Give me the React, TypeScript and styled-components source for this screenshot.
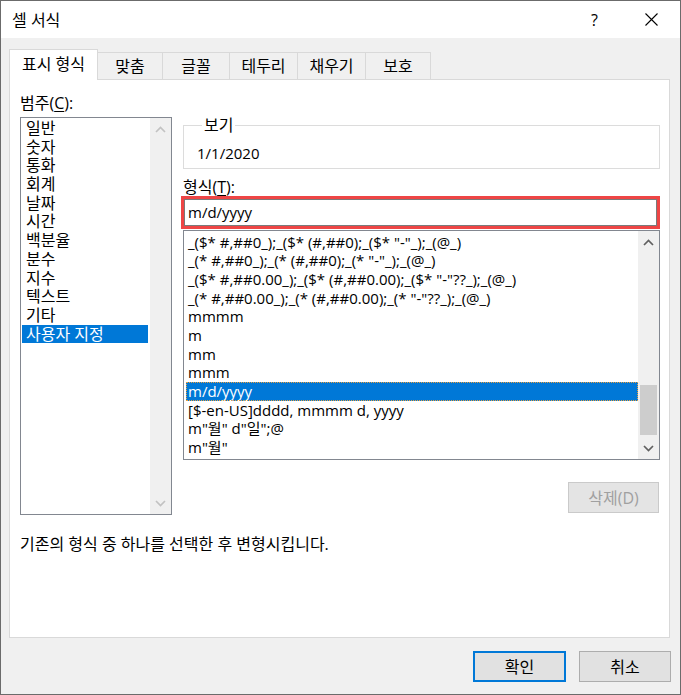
import React from 'react';
import styled, { createGlobalStyle } from 'styled-components';

const Global = createGlobalStyle`
  html, body { margin: 0; padding: 0; background: #ffffff; }
  body {
    font-family: "Open Sans", "Noto Sans CJK KR", sans-serif;
    color: #000;
  }
  * { box-sizing: border-box; }
`;

const FONT = `"Open Sans", "Noto Sans CJK KR", sans-serif`;
const KO = 16;
const LATIN = 15;

const Window = styled.div`
  width: 681px;
  height: 695px;
  border: 1px solid #6b6b6b;
  background: #f0f0f0;
  display: flex;
  flex-direction: column;
  font-family: ${FONT};
  font-size: ${KO}px;
`;

const TitleBar = styled.div`
  height: 37px;
  background: #ffffff;
  display: flex;
  align-items: center;
  padding-left: 11px;
`;

const Title = styled.div`
  flex: 1;
  font-size: ${KO}px;
  line-height: 20px;
  margin-top: 1px;
`;

const CaptionButton = styled.div<{ $w: number }>`
  width: ${(p) => p.$w}px;
  height: 37px;
  display: flex;
  align-items: center;
  justify-content: center;
  font-size: 16px;
  line-height: 20px;
`;

const Body = styled.div`
  flex: 1;
  display: flex;
  flex-direction: column;
  padding: 11px 10px 12px 8px;
`;

const TabRow = styled.div`
  display: flex;
  align-items: flex-end;
  margin-bottom: -1px;
  position: relative;
  z-index: 1;
`;

const Tab = styled.div<{ $w: number; $active?: boolean }>`
  width: ${(p) => p.$w}px;
  height: ${(p) => (p.$active ? 31 : 28)}px;
  background: ${(p) => (p.$active ? '#ffffff' : '#f0f0f0')};
  border: 1px solid #d9d9d9;
  border-left: ${(p) => (p.$active ? '1px solid #d9d9d9' : '0')};
  border-bottom: ${(p) => (p.$active ? '0' : '1px solid #d9d9d9')};
  display: flex;
  justify-content: center;
  align-items: ${(p) => (p.$active ? 'flex-start' : 'center')};
  padding-top: ${(p) => (p.$active ? '4px' : '0')};
  font-size: ${KO}px;
  line-height: 20px;
`;

const Panel = styled.div`
  flex: 1;
  background: #ffffff;
  border: 1px solid #d9d9d9;
  padding: 13px 9px 0 10px;
  display: flex;
  flex-direction: column;
`;

const Columns = styled.div`
  display: grid;
  grid-template-columns: 152px 477px;
  column-gap: 11px;
`;

const Column = styled.div`
  display: flex;
  flex-direction: column;
`;

const Label = styled.div`
  font-size: ${KO}px;
  line-height: 20px;
  height: 20px;
`;

const U = styled.span`
  text-decoration: underline;
  text-underline-offset: 2px;
`;

const ListBox = styled.div<{ $h: number; $mt: number }>`
  height: ${(p) => p.$h}px;
  margin-top: ${(p) => p.$mt}px;
  border: 1px solid #828790;
  background: #ffffff;
  display: flex;
  overflow: hidden;
`;

const Items = styled.div<{ $pad: string }>`
  flex: 1;
  padding: ${(p) => p.$pad};
  display: flex;
  flex-direction: column;
  overflow: hidden;
`;

const Item = styled.div<{ $sel?: boolean; $indent: number; $size: number }>`
  height: 18.7px;
  line-height: 18.7px;
  font-size: ${(p) => p.$size}px;
  padding-left: ${(p) => p.$indent}px;
  white-space: nowrap;
  flex-shrink: 0;
  background: ${(p) => (p.$sel ? '#0078d7' : 'transparent')};
  color: ${(p) => (p.$sel ? '#ffffff' : '#000000')};
`;

const FocusItem = styled(Item)`
  outline: 1px dotted #e8a040;
  outline-offset: -1px;
`;

const ScrollBar = styled.div`
  width: 21px;
  background: #f0f0f0;
  display: flex;
  flex-direction: column;
`;

const ArrowBox = styled.div`
  height: 22px;
  display: flex;
  align-items: center;
  justify-content: center;
  flex-shrink: 0;
`;

const Track = styled.div`
  flex: 1;
  display: flex;
  flex-direction: column;
  align-items: center;
`;

const Thumb = styled.div<{ $top: number; $h: number }>`
  width: 17px;
  height: ${(p) => p.$h}px;
  margin-top: ${(p) => p.$top}px;
  background: #cdcdcd;
`;

const Preview = styled.fieldset`
  margin: 0;
  margin-top: 23px;
  border: 1px solid #dcdcdc;
  padding: 9px 0 5px 13px;
  min-width: 0;
`;

const Legend = styled.legend`
  padding: 0 2px;
  margin-left: 5px;
  font-size: ${KO}px;
  line-height: 18px;
`;

const PreviewValue = styled.div`
  font-size: ${LATIN}px;
  line-height: 20px;
`;

const FormatLabel = styled(Label)`
  margin-top: 8px;
`;

const FormatInput = styled.div`
  margin: 2px 3px 0 1px;
  height: 27px;
  border: 1px solid #7a7a7a;
  outline: 3px solid #ee4545;
  background: #fff;
  padding-left: 3px;
  font-size: ${LATIN}px;
  line-height: 25px;
  position: relative;
  z-index: 1;
`;

const ButtonRow = styled.div`
  display: flex;
  justify-content: flex-end;
  margin-top: 22px;
  margin-right: 1px;
`;

const Button = styled.div<{ $w: number; $variant?: 'default' | 'disabled' | 'normal' }>`
  width: ${(p) => p.$w}px;
  height: 31px;
  display: flex;
  align-items: center;
  justify-content: center;
  font-size: ${KO}px;
  line-height: 20px;
  background: ${(p) => (p.$variant === 'disabled' ? '#e4e4e4' : '#e1e1e1')};
  border: ${(p) =>
    p.$variant === 'default'
      ? '2px solid #0078d7'
      : p.$variant === 'disabled'
      ? '1px solid #cacaca'
      : '1px solid #adadad'};
  color: ${(p) => (p.$variant === 'disabled' ? '#a0a0a0' : '#000')};
`;

const Description = styled.div`
  margin-top: 19px;
  font-size: ${KO}px;
  line-height: 20px;
`;

const Footer = styled.div`
  display: flex;
  justify-content: flex-end;
  gap: 13px;
  padding-top: 13px;
  margin-right: -1px;
`;

const Chevron = ({ up, color }: { up?: boolean; color: string }) => (
  <svg width="11" height="7" viewBox="0 0 11 7">
    <path
      d={up ? 'M1 6 L5.5 1.5 L10 6' : 'M1 1 L5.5 5.5 L10 1'}
      fill="none"
      stroke={color}
      strokeWidth="1.7"
    />
  </svg>
);

const CloseIcon = () => (
  <svg width="13" height="13" viewBox="0 0 13 13">
    <path d="M0.5 0.5 L12.5 12.5 M12.5 0.5 L0.5 12.5" stroke="#000" strokeWidth="1.1" />
  </svg>
);

const tabs = [
  { label: '표시 형식', w: 89, active: true },
  { label: '맞춤', w: 65 },
  { label: '글꼴', w: 67 },
  { label: '테두리', w: 68 },
  { label: '채우기', w: 68 },
  { label: '보호', w: 65 },
];

const categories = [
  '일반',
  '숫자',
  '통화',
  '회계',
  '날짜',
  '시간',
  '백분율',
  '분수',
  '지수',
  '텍스트',
  '기타',
  '사용자 지정',
];

const formats = [
  '_($* #,##0_);_($* (#,##0);_($* "-"_);_(@_)',
  '_(* #,##0_);_(* (#,##0);_(* "-"_);_(@_)',
  '_($* #,##0.00_);_($* (#,##0.00);_($* "-"??_);_(@_)',
  '_(* #,##0.00_);_(* (#,##0.00);_(* "-"??_);_(@_)',
  'mmmm',
  'm',
  'mm',
  'mmm',
  'm/d/yyyy',
  '[$-en-US]dddd, mmmm d, yyyy',
  'm"월" d"일";@',
  'm"월"',
];

export default function App() {
  return (
    <>
      <Global />
      <Window>
        <TitleBar>
          <Title>셀 서식</Title>
          <CaptionButton $w={55}>?</CaptionButton>
          <CaptionButton $w={58}>
            <CloseIcon />
          </CaptionButton>
        </TitleBar>
        <Body>
          <TabRow>
            {tabs.map((t) => (
              <Tab key={t.label} $w={t.w} $active={t.active}>
                {t.label}
              </Tab>
            ))}
          </TabRow>
          <Panel>
            <Columns>
              <Column>
                <Label>
                  범주(<U>C</U>):
                </Label>
                <ListBox $h={398} $mt={4}>
                  <Items $pad="1px 2px 0 1px">
                    {categories.map((c, i) => (
                      <Item key={c} $size={KO} $indent={4} $sel={i === categories.length - 1}>
                        {c}
                      </Item>
                    ))}
                  </Items>
                  <ScrollBar>
                    <ArrowBox>
                      <Chevron up color="#c2c2c2" />
                    </ArrowBox>
                    <Track />
                    <ArrowBox>
                      <Chevron color="#c2c2c2" />
                    </ArrowBox>
                  </ScrollBar>
                </ListBox>
              </Column>
              <Column>
                <Preview>
                  <Legend>보기</Legend>
                  <PreviewValue>1/1/2020</PreviewValue>
                </Preview>
                <FormatLabel>
                  형식(<U>T</U>):
                </FormatLabel>
                <FormatInput>m/d/yyyy</FormatInput>
                <ListBox $h={230} $mt={4}>
                  <Items $pad="1.5px 0 0 2px">
                    {formats.map((f, i) =>
                      i === 8 ? (
                        <FocusItem key={f} $size={LATIN} $indent={2} $sel>
                          {f}
                        </FocusItem>
                      ) : (
                        <Item key={f} $size={LATIN} $indent={2}>
                          {f}
                        </Item>
                      )
                    )}
                  </Items>
                  <ScrollBar>
                    <ArrowBox>
                      <Chevron up color="#606060" />
                    </ArrowBox>
                    <Track>
                      <Thumb $top={132} $h={50} />
                    </Track>
                    <ArrowBox>
                      <Chevron color="#606060" />
                    </ArrowBox>
                  </ScrollBar>
                </ListBox>
                <ButtonRow>
                  <Button $w={91} $variant="disabled">
                    삭제(D)
                  </Button>
                </ButtonRow>
              </Column>
            </Columns>
            <Description>기존의 형식 중 하나를 선택한 후 변형시킵니다.</Description>
          </Panel>
          <Footer>
            <Button $w={93} $variant="default">
              확인
            </Button>
            <Button $w={92} $variant="normal">
              취소
            </Button>
          </Footer>
        </Body>
      </Window>
    </>
  );
}
